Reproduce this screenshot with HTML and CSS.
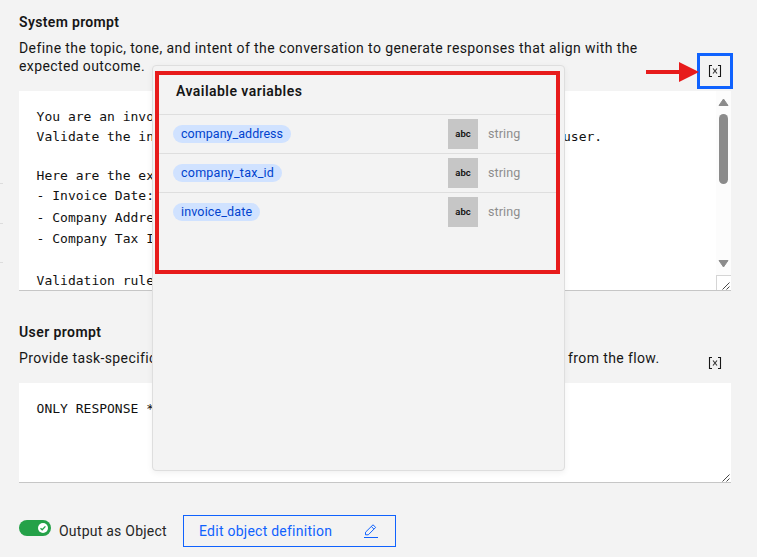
FILE: index.html
```html
<!DOCTYPE html>
<html lang="en">
<head>
<meta charset="utf-8">
<title>Prompt settings</title>
<link rel="stylesheet" href="styles.css">
</head>
<body>
<main class="panel">
  <section class="prompt system">
    <h2 class="w-sys">System prompt</h2>
    <p class="desc"><span class="w-d1">Define the topic, tone, and intent of the conversation to generate responses that align with the</span><br><span class="w-d2">expected outcome.</span></p>
    <button class="var-btn active" aria-label="Insert variable"><svg width="14" height="14" viewBox="0 0 14 14"><path d="M4 1.500H1.500v11H4M10 1.500h2.500v11H10"/><path class="x" d="M5 4.500l4 5M9 4.500l-4 5"/></svg></button>
    <div class="editor tall">
      <div class="lines">
        <div>You are an invo</div>
        <div class="split"><span>Validate the in</span><span class="user">user.</span></div>
        <div>&nbsp;</div>
        <div>Here are the ex</div>
        <div>- Invoice Date:</div>
        <div class="loose first">- Company Addre</div>
        <div class="loose">- Company Tax I</div>
        <div class="loose">&nbsp;</div>
        <div class="loose">Validation rule</div>
      </div>
      <div class="scrollbar">
        <svg width="15" height="23" viewBox="0 0 15 23"><path d="M7.500 8L12 14.500H3z"/></svg>
        <div class="thumb"></div>
        <svg class="down" width="15" height="19" viewBox="0 0 15 19"><path d="M3 4.500h9L7.500 11z"/></svg>
        <div class="corner"></div>
      </div>
      <svg class="grip" width="8" height="8" viewBox="0 0 8 8"><path d="M.5 7.500l7-7M4.500 7.500l3-3"/></svg>
    </div>
  </section>
  <section class="prompt user-prompt">
    <h2 class="w-usr">User prompt</h2>
    <p class="desc split"><span class="w-d3">Provide task-specific</span><span class="flow">from the flow.</span></p>
    <button class="var-btn" aria-label="Insert variable"><svg width="14" height="14" viewBox="0 0 14 14"><path d="M4 1.500H1.500v11H4M10 1.500h2.500v11H10"/><path class="x" d="M5 4.500l4 5M9 4.500l-4 5"/></svg></button>
    <div class="editor short">
      <div class="lines"><div>ONLY RESPONSE *</div></div>
      <svg class="grip" width="8" height="8" viewBox="0 0 8 8"><path d="M.5 7.500l7-7M4.500 7.500l3-3"/></svg>
    </div>
  </section>
  <footer class="output">
    <span class="toggle"><svg width="10" height="10" viewBox="0 0 10 10"><circle cx="5" cy="5" r="5"/><path d="M2.500 5.200l1.700 1.600 3.200-3.400"/></svg></span>
    <span class="output-label">Output as Object</span>
    <button class="edit"><span>Edit object definition</span><svg width="14" height="14" viewBox="0 0 14 14"><path d="M0 13.500h14M1.500 10.800v-2.600L9 .8l2.700 2.600-7.400 7.400zM7.300 2.500l2.600 2.500"/></svg></button>
  </footer>
</main>
<i class="tick t1"></i><i class="tick t2"></i><i class="tick t3"></i>
<svg class="arrow" width="53" height="20" viewBox="0 0 53 20"><path d="M0 8h33V0l20 10-20 10v-8H0z"/></svg>
<aside class="popover">
  <div class="highlight">
    <h3><span>Available variables</span></h3>
    <div class="row"><span class="tag a">company_address</span><span class="abc">abc</span><span class="type">string</span></div>
    <div class="row"><span class="tag b">company_tax_id</span><span class="abc">abc</span><span class="type">string</span></div>
    <div class="row"><span class="tag c">invoice_date</span><span class="abc">abc</span><span class="type">string</span></div>
  </div>
</aside>
</body>
</html>
```
FILE: styles.css
```css
* { box-sizing: border-box; }
body { margin: 0; width: 757px; height: 557px; overflow: hidden; position: relative; background: #f3f3f3; color: #161616; font: 14px/18px Roboto, "Liberation Sans", sans-serif; }
h2, h3, p { margin: 0; }
button { font: inherit; background: none; border: 0; padding: 0; }
.panel { padding: 13px 26px 0 19px; }
.prompt { position: relative; }
h2 { font-size: 14px; line-height: 18px; font-weight: 600; margin-bottom: 8px; }
.desc { white-space: nowrap; height: 36px; }
.system { height: 310px; }
.system .editor { margin-top: 16px; }
.user-prompt { height: 192px; }
.user-prompt .desc { height: 34px; }
.split { display: flex; }
.w-sys { letter-spacing: .34px; }
.w-usr { letter-spacing: .42px; }
.w-d1 { letter-spacing: .405px; }
.w-d2, .w-d3, .flow { letter-spacing: .39px; }
.w-d3 { width: 549px; }
.var-btn { position: absolute; right: -2px; top: 40px; width: 36px; height: 36px; display: grid; place-items: center; }
.var-btn.active { border: 3px solid #0f62fe; }
.user-prompt .var-btn { top: 22px; right: -2px; }
.var-btn svg { fill: none; stroke: #161616; stroke-width: 1.1; }
.var-btn .x { stroke: #333; stroke-width: 1.1; }
.editor { position: relative; width: 712px; background: #fff; border-bottom: 1px solid #c6c6c6; display: flex; overflow: hidden; }
.tall { height: 200px; }
.short { height: 100px; }
.lines { flex: 1; padding: 16px 0 0 17.6px; font: 13px/19.7px "DejaVu Sans Mono", monospace; white-space: nowrap; color: #111; }
.lines .loose { line-height: 21.2px; }
.lines .first { padding-top: 1px; }
.user { margin-left: 409px; }
.scrollbar { width: 15px; background: #fcfcfc; display: flex; flex-direction: column; }
.scrollbar svg { flex: none; fill: #8b8b8b; stroke: #8b8b8b; stroke-width: 1; stroke-linejoin: round; }
.thumb { width: 9px; height: 70px; margin: 0 3px; border-radius: 5px; background: #8b8b8b; }
.down { margin-top: auto; }
.corner { height: 15px; border: solid #d5d5d5; border-width: 1px 0 0 1px; background: #fff; }
.grip { position: absolute; right: 1px; bottom: 0; fill: none; stroke: #333; stroke-width: .9; }
.output { display: flex; align-items: center; height: 32px; }
.toggle { width: 32px; height: 16px; border-radius: 8px; background: #24a148; padding: 3px; display: flex; justify-content: flex-end; position: relative; top: -3px; }
.toggle circle { fill: #fff; }
.toggle path { fill: none; stroke: #24a148; stroke-width: 1.3; }
.output-label { margin-left: 8px; width: 124px; letter-spacing: .24px; white-space: nowrap; color: #262626; }
.edit { width: 213px; height: 32px; border: 1px solid #0f62fe; color: #0f62fe; padding: 0 17px 0 15px; display: flex; align-items: center; justify-content: space-between; letter-spacing: .25px; }
.edit svg { fill: none; stroke: #0f62fe; stroke-width: 1; }
.tick { position: absolute; left: 0; width: 3px; height: 1px; background: #ddd; }
.t1 { top: 183px; } .t2 { top: 223px; } .t3 { top: 262px; }
.arrow { position: absolute; left: 646px; top: 62px; fill: #e71b1b; }
.popover { position: absolute; left: 152px; top: 65px; width: 413px; height: 406px; background: #f3f3f3; border: 1px solid #dedede; border-radius: 4px; box-shadow: 0 2px 6px rgba(0,0,0,.06); padding: 5px 4px 0 2px; }
.highlight { width: 405px; height: 203px; border: 4px solid #e71b1b; }
h3 { height: 39px; padding: 7px 0 0 17px; font-size: 14px; line-height: 18px; font-weight: 600; letter-spacing: .46px; }
.row { height: 39px; border-top: 1px solid #dedede; display: flex; align-items: center; padding-left: 14px; }
.tag { height: 18px; line-height: 18px; border-radius: 9px; background: #d0e2ff; color: #0043ce; font-size: 12.5px; padding-left: 8px; white-space: nowrap; }
.a { width: 118px; margin-right: 157px; letter-spacing: .04px; }
.b { width: 109px; margin-right: 166px; letter-spacing: .24px; }
.c { width: 87px; margin-right: 188px; letter-spacing: .15px; }
.abc { width: 30px; height: 30px; background: #c6c6c6; color: #111; font-size: 9.5px; font-weight: 600; line-height: 30px; text-align: center; }
.type { margin-left: 10px; color: #8d8d8d; font-size: 12.5px; letter-spacing: .1px; }
```
